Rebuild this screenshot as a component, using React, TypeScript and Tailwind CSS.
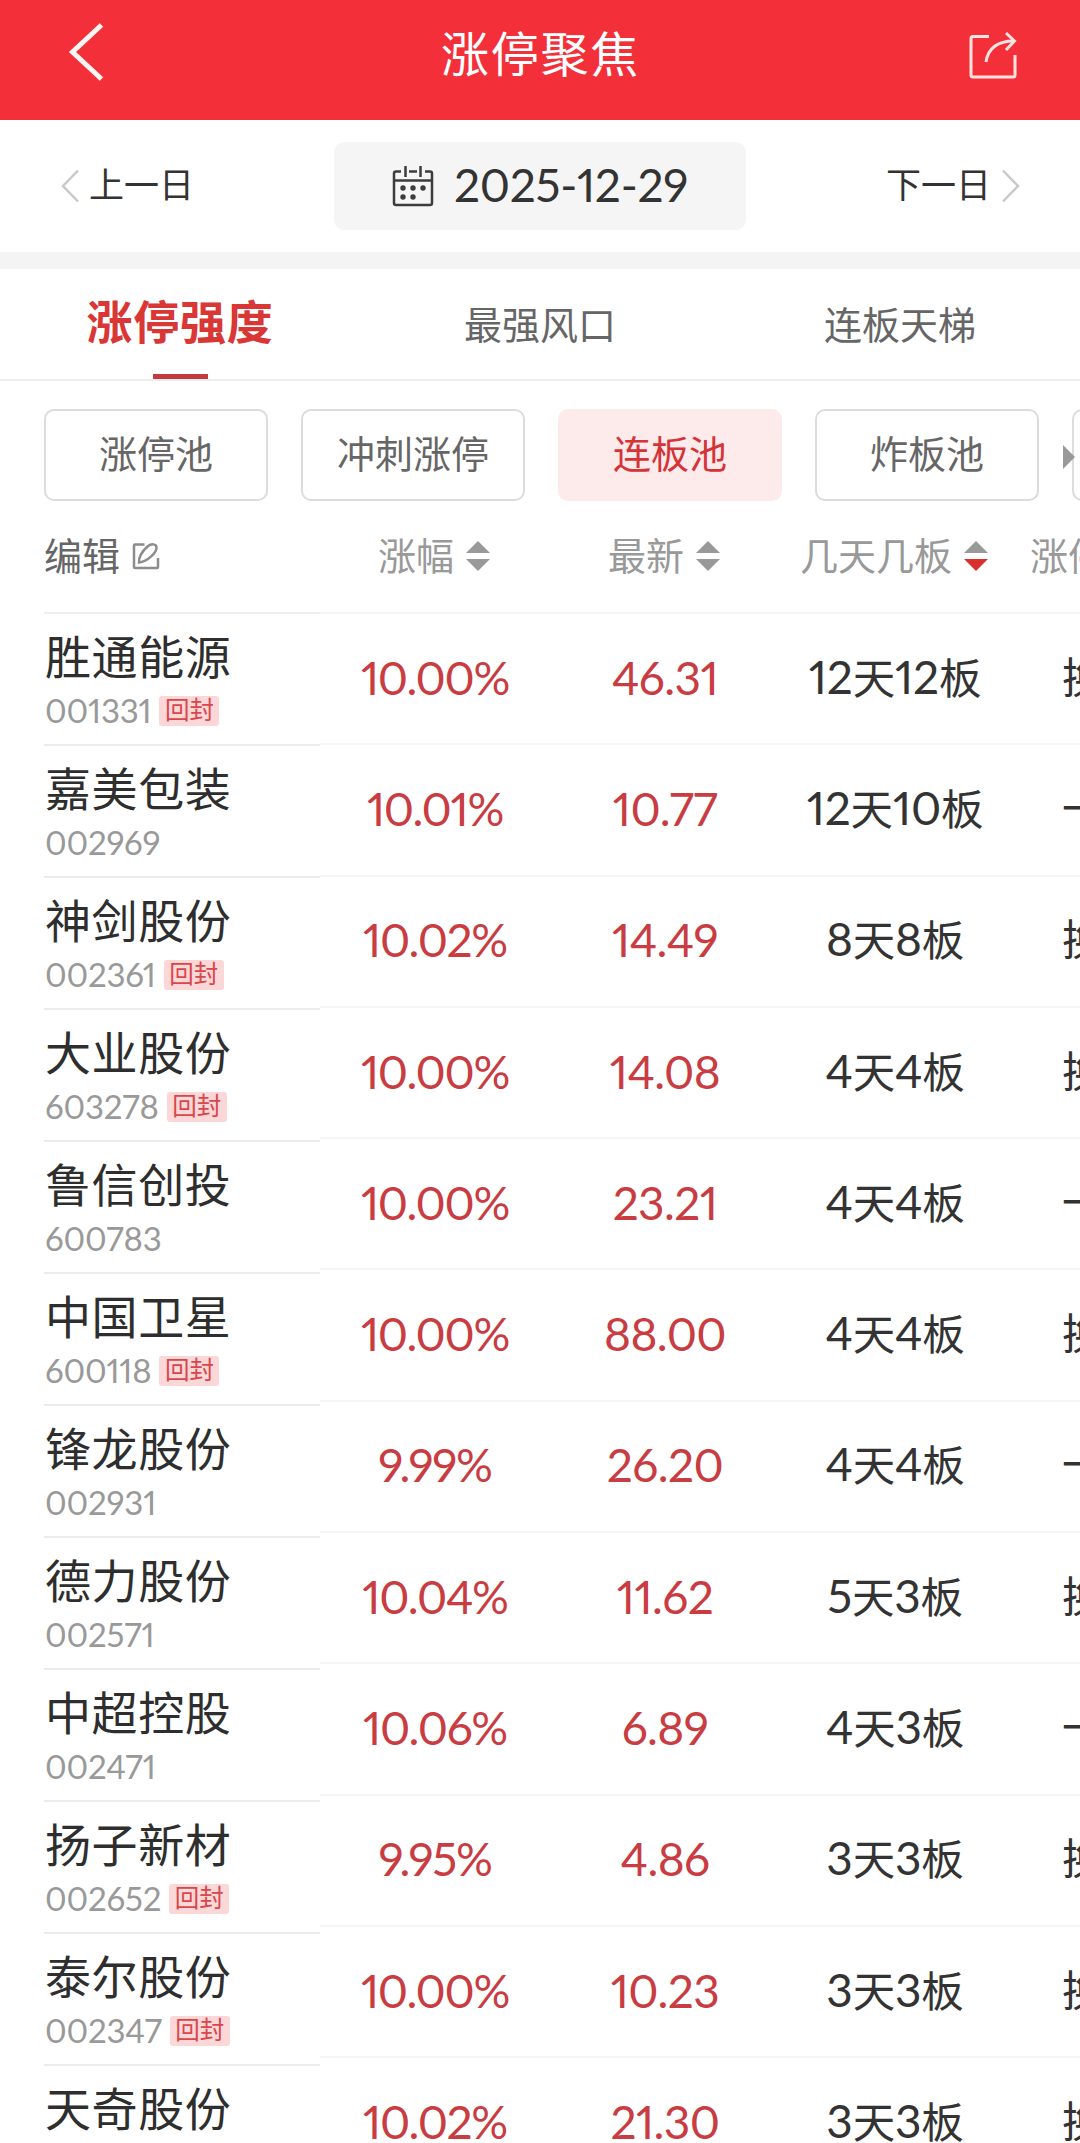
import React from "react";

type Stock = {
  name: string;
  code: string;
  resealed?: boolean;
  change: string;
  price: string;
  streak: string;
  kind: string;
};

const STOCKS: Stock[] = [
  { name: "胜通能源", code: "001331", resealed: true, change: "10.00%", price: "46.31", streak: "12天12板", kind: "换手板" },
  { name: "嘉美包装", code: "002969", change: "10.01%", price: "10.77", streak: "12天10板", kind: "一字板" },
  { name: "神剑股份", code: "002361", resealed: true, change: "10.02%", price: "14.49", streak: "8天8板", kind: "换手板" },
  { name: "大业股份", code: "603278", resealed: true, change: "10.00%", price: "14.08", streak: "4天4板", kind: "换手板" },
  { name: "鲁信创投", code: "600783", change: "10.00%", price: "23.21", streak: "4天4板", kind: "一字板" },
  { name: "中国卫星", code: "600118", resealed: true, change: "10.00%", price: "88.00", streak: "4天4板", kind: "换手板" },
  { name: "锋龙股份", code: "002931", change: "9.99%", price: "26.20", streak: "4天4板", kind: "一字板" },
  { name: "德力股份", code: "002571", change: "10.04%", price: "11.62", streak: "5天3板", kind: "换手板" },
  { name: "中超控股", code: "002471", change: "10.06%", price: "6.89", streak: "4天3板", kind: "一字板" },
  { name: "扬子新材", code: "002652", resealed: true, change: "9.95%", price: "4.86", streak: "3天3板", kind: "换手板" },
  { name: "泰尔股份", code: "002347", resealed: true, change: "10.00%", price: "10.23", streak: "3天3板", kind: "换手板" },
  { name: "天奇股份", code: "002009", change: "10.02%", price: "21.30", streak: "3天3板", kind: "换手板" },
];

const POOLS = ["涨停池", "冲刺涨停", "连板池", "炸板池", "跌停池"];

const COLUMNS = [
  { label: "涨幅" },
  { label: "最新" },
  { label: "几天几板", sorted: true },
  { label: "涨停类型" },
];

function Header() {
  return (
    <header className="flex h-[120px] items-start justify-between bg-[#f3303a] pr-[60px] pl-[67px] text-white">
      <svg className="mt-[20px] h-[64px] w-[50px]" viewBox="0 0 50 64" fill="none" stroke="#fff5f2" strokeWidth="5">
        <path d="M34.500 5 L5.500 32 L34.500 59" />
      </svg>
      <h1 className="mt-[18px] mr-[4px] text-[48px] leading-[72px] tracking-[1.7px]">涨停聚焦</h1>
      <svg className="mt-[30px] h-[52px] w-[52px]" viewBox="0 0 52 52" fill="none" stroke="#ffe3e0" strokeWidth="3">
        <path d="M21 6.500 H5 a2 2 0 0 0 -2 2 V45 a2 2 0 0 0 2 2 H45 a2 2 0 0 0 2 -2 V25" />
        <path d="M18 32 C20 19 29 11 46 11" />
        <path d="M38 3 L46.500 11 L38 20" />
      </svg>
    </header>
  );
}

function CalendarIcon() {
  return (
    <svg className="h-[42px] w-[42px]" viewBox="0 0 42 42" fill="none" stroke="#3c3c3c" strokeWidth="2.500">
      <path d="M9 6.500 H4 a2 2 0 0 0 -2 2 V38 a2 2 0 0 0 2 2 H38 a2 2 0 0 0 2 -2 V8.500 a2 2 0 0 0 -2 -2 H33" />
      <path d="M17 6.500 H25 M2 15.500 H40 M13.500 1 V12 M28.500 1 V12" />
      <g fill="#3c3c3c" stroke="none">
        <circle cx="11" cy="23" r="2.700" />
        <circle cx="21" cy="23" r="2.700" />
        <circle cx="31" cy="23" r="2.700" />
        <circle cx="11" cy="32" r="2.700" />
        <circle cx="21" cy="32" r="2.700" />
      </g>
    </svg>
  );
}

function DateBar() {
  return (
    <div className="flex h-[149px] items-start justify-between border-b-[17px] border-[#f4f4f4] px-[60px] pt-[22px] text-[35px] text-[#333]">
      <button className="flex h-[88px] w-[150px] items-center gap-[9px] whitespace-nowrap">
        <svg className="h-[34px] w-[20px] shrink-0" viewBox="0 0 20 34" fill="none" stroke="#c8c8c8" strokeWidth="2.500">
          <path d="M18 1.500 L3 17 L18 32.500" />
        </svg>
        <span className="-mt-[4px]">上一日</span>
      </button>
      <button className="flex h-[88px] w-[412px] items-center justify-center gap-[20px] rounded-[10px] bg-[#f5f5f5]">
        <CalendarIcon />
        <span className="-mt-[3px] text-[46px] tracking-[-0.300px] proportional-nums">2025-12-29</span>
      </button>
      <button className="flex h-[88px] w-[150px] items-center justify-end gap-[9px] whitespace-nowrap">
        <span className="-mt-[4px]">下一日</span>
        <svg className="h-[34px] w-[20px] shrink-0" viewBox="0 0 20 34" fill="none" stroke="#c8c8c8" strokeWidth="2.500">
          <path d="M3 1.500 L18 17 L3 32.500" />
        </svg>
      </button>
    </div>
  );
}

function Tabs() {
  return (
    <nav className="grid h-[112px] grid-cols-3 border-b-2 border-[#eee] text-center text-[38px] text-[#666]">
      <div className="flex flex-col items-center justify-between text-[46px] font-bold text-[#d93636]">
        <span className="pt-[19px] leading-[68px] tracking-[0.7px]">涨停强度</span>
        <span className="h-[5px] w-[55px] bg-[#c63a3e]" />
      </div>
      <span className="pt-[27px] leading-[57px]">最强风口</span>
      <span className="pt-[27px] leading-[57px]">连板天梯</span>
    </nav>
  );
}

function Pools() {
  return (
    <div className="relative flex gap-[33px] overflow-hidden pt-[28px] pl-[44px] text-[38px]">
      {POOLS.map((pool) => (
        <button
          key={pool}
          className={`flex h-[92px] w-[224px] shrink-0 items-center justify-center rounded-[10px] pb-[3px] ${
            pool === "连板池" ? "bg-[#fdeaea] text-[#d43338]" : "border-2 border-[#dcdcdc] text-[#666]"
          }`}
        >
          {pool}
        </button>
      ))}
      {/* scroll hint over the clipped chip */}
      <svg className="absolute top-[64px] left-[1063px] h-[24px] w-[12px]" viewBox="0 0 12 24" fill="#999">
        <path d="M0 0 L12 12 L0 24 Z" />
      </svg>
    </div>
  );
}

function SortIcon({ active }: { active?: boolean }) {
  return (
    <svg className="h-[30px] w-[24px] shrink-0" viewBox="0 0 24 30" fill="#999">
      <path d="M12 0 L24 12 H0 Z" />
      <path d="M0 18 H24 L12 30 Z" fill={active ? "#d9302f" : "#999"} />
    </svg>
  );
}

function EditIcon() {
  return (
    <svg className="h-[28px] w-[28px]" viewBox="0 0 28 28" fill="none" stroke="#8c8c8c" strokeWidth="2.500">
      <path d="M12.500 2.500 H3 a1 1 0 0 0 -1 1 V25 a1 1 0 0 0 1 1 H25 a1 1 0 0 0 1 -1 V16" />
      <path d="M7 20.500 C6.500 15 10 9.500 15.500 4.500 C19 1.500 24.500 1.500 24.500 5.500 C24.500 11 15.500 19.500 7 20.500 Z" />
    </svg>
  );
}

// digits run slightly larger than the characters next to them
function Streak({ text }: { text: string }) {
  return (
    <span className="-mt-[2px] text-[42.5px] tracking-[-0.200px] text-[#333]">
      {text.split(/(\d+)/).map((part, i) =>
        /\d/.test(part) ? (
          <span key={i} className="text-[46px] proportional-nums">{part}</span>
        ) : (
          part
        ),
      )}
    </span>
  );
}

function NameColumn() {
  return (
    <div className="w-[320px] shrink-0 pl-[44px]">
      <div className="flex h-[113px] items-center gap-[12px] border-b-2 border-[#eee] pb-[2px] text-[38px] text-[#666]">
        编辑
        <EditIcon />
      </div>
      {STOCKS.map((s) => (
        <div key={s.code} className="h-[132px] border-b-2 border-[#ececec] pt-[15px] pl-[1px]">
          <div className="h-[57px] text-[46px] leading-[56px] tracking-[0.6px] text-[#2e2e2e]">{s.name}</div>
          <div className="flex h-[50px] items-center gap-[8px]">
            <span className="text-[33px] tracking-[-0.200px] text-[#999] proportional-nums">{s.code}</span>
            {s.resealed && (
              <span className="flex h-[30px] w-[60px] items-center justify-center rounded-[3px] bg-[#fcd7d8] pb-[2px] text-[24.5px] text-[#d8474c]">
                回封
              </span>
            )}
          </div>
        </div>
      ))}
    </div>
  );
}

function DataColumns() {
  return (
    <div className="w-[920px] shrink-0">
      <div className="grid h-[113px] grid-cols-4 border-b-2 border-[#f5f5f5] pb-[2px] text-[38px] text-[#999]">
        {COLUMNS.map((c) => (
          <div key={c.label} className="flex items-center justify-center gap-[12px] pr-[2px] whitespace-nowrap">
            {c.label}
            <SortIcon active={c.sorted} />
          </div>
        ))}
      </div>
      {STOCKS.map((s) => (
        <div key={s.code} className="grid h-[131.3px] grid-cols-4 items-center border-b-2 border-[#f5f5f5] pb-[3px] text-center text-[46px] text-[#c83c42]">
          <span className="tracking-[-1.300px] proportional-nums">{s.change}</span>
          <span className="tracking-[-0.600px] proportional-nums">{s.price}</span>
          <Streak text={s.streak} />
          <span className="text-[42px] text-[#333]">{s.kind}</span>
        </div>
      ))}
    </div>
  );
}

export default function App() {
  return (
    <div className="h-[2143px] w-[1080px] overflow-hidden bg-white font-['Lato','Noto_Sans_CJK_SC',sans-serif]">
      <Header />
      <DateBar />
      <Tabs />
      <Pools />
      <div className="flex">
        <NameColumn />
        <DataColumns />
      </div>
    </div>
  );
}
